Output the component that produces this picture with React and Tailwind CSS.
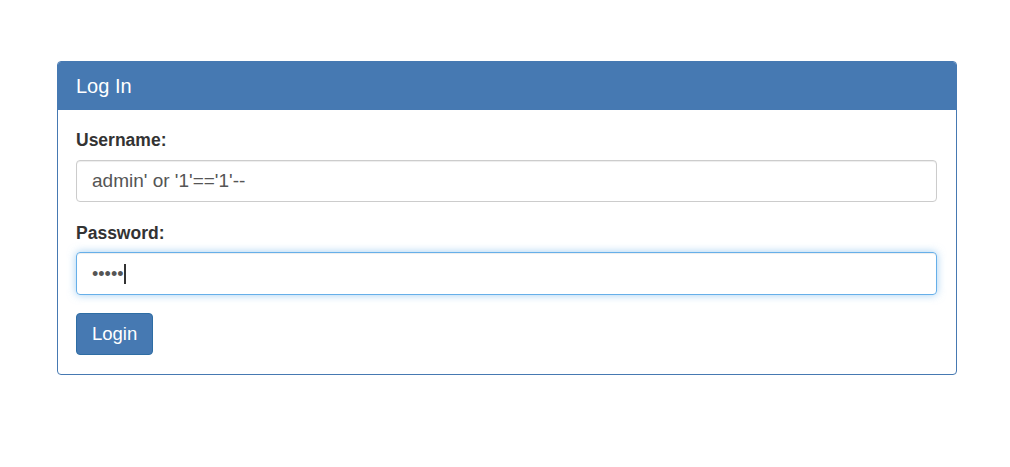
import React from 'react';

const App = () => {
    return (
        <div className="min-h-screen bg-white pt-[61px] pl-[57px]" style={{ fontFamily: '"Liberation Sans", Arial, sans-serif' }}>
            <div className="w-[900px] border border-[#4679b2] rounded-[4px] bg-white">
                {/* panel heading */}
                <div className="h-[48px] bg-[#4679b2] rounded-t-[3px] flex items-center px-[18px]">
                    <h3 className="text-[20px] text-white leading-none">Log In</h3>
                </div>

                {/* panel body */}
                <div className="pl-[18px] pr-[19px] pt-[19px] pb-[19px]">
                    <label className="block text-[17.5px] leading-[22px] font-bold text-[#333] mb-[9px]">Username:</label>
                    <div className="h-[42px] border border-[#ccc] rounded-[4px] flex items-center px-[15px] text-[19px] text-[#555] shadow-[inset_0_1px_1px_rgba(0,0,0,0.075)]">
                        admin' or '1'=='1'--
                    </div>

                    <label className="block text-[17.5px] leading-[22px] font-bold text-[#333] mt-[20px] mb-[8px]">Password:</label>
                    <div className="h-[43px] border border-[#66afe9] rounded-[4px] flex items-center px-[15px] text-[18px] text-[#555] shadow-[inset_0_1px_1px_rgba(0,0,0,0.075),0_0_8px_rgba(102,175,233,0.6)]">
                        <span className="leading-none">•••••</span>
                        <span className="inline-block w-[2px] h-[20px] bg-[#333]"></span>
                    </div>

                    <button
                        type="button"
                        className="mt-[18px] h-[42px] px-[15px] bg-[#4679b2] border border-[#2e6da4] rounded-[4px] text-white text-[18.5px]"
                    >
                        Login
                    </button>
                </div>
            </div>
        </div>
    );
};

export default App;
